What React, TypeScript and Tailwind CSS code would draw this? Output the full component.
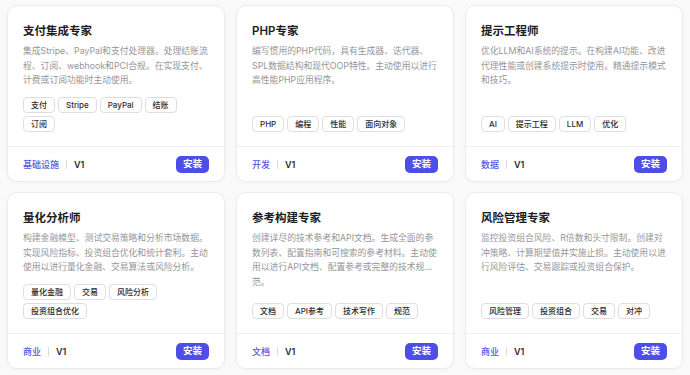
import React from "react";

type Card = {
  title: string;
  lines: string[];
  tags: string[];
  cat: string;
};

const cards: Card[] = [
  {
    title: "支付集成专家",
    lines: [
      "集成Stripe、PayPal和支付处理器。处理结账流",
      "程、订阅、webhook和PCI合规。在实现支付、",
      "计费或订阅功能时主动使用。",
    ],
    tags: ["支付", "Stripe", "PayPal", "结账", "订阅"],
    cat: "基础设施",
  },
  {
    title: "PHP专家",
    lines: [
      "编写惯用的PHP代码，具有生成器、迭代器、",
      "SPL数据结构和现代OOP特性。主动使用以进行",
      "高性能PHP应用程序。",
    ],
    tags: ["PHP", "编程", "性能", "面向对象"],
    cat: "开发",
  },
  {
    title: "提示工程师",
    lines: [
      "优化LLM和AI系统的提示。在构建AI功能、改进",
      "代理性能或创建系统提示时使用。精通提示模式",
      "和技巧。",
    ],
    tags: ["AI", "提示工程", "LLM", "优化"],
    cat: "数据",
  },
  {
    title: "量化分析师",
    lines: [
      "构建金融模型、测试交易策略和分析市场数据。",
      "实现风险指标、投资组合优化和统计套利。主动",
      "使用以进行量化金融、交易算法或风险分析。",
    ],
    tags: ["量化金融", "交易", "风险分析", "投资组合优化"],
    cat: "商业",
  },
  {
    title: "参考构建专家",
    lines: [
      "创建详尽的技术参考和API文档。生成全面的参",
      "数列表、配置指南和可搜索的参考材料。主动使",
      "用以进行API文档、配置参考或完整的技术规...",
      "范。",
    ],
    tags: ["文档", "API参考", "技术写作", "规范"],
    cat: "文档",
  },
  {
    title: "风险管理专家",
    lines: [
      "监控投资组合风险、R倍数和头寸限制。创建对",
      "冲策略、计算期望值并实施止损。主动使用以进",
      "行风险评估、交易跟踪或投资组合保护。",
    ],
    tags: ["风险管理", "投资组合", "交易", "对冲"],
    cat: "商业",
  },
];

function AgentCard({ c }: { c: Card }) {
  return (
    <div className="flex h-[177px] flex-col rounded-[10px] border border-[#ededf0] bg-white shadow-[0_1px_4px_rgba(0,0,0,0.04)]">
      <div className="flex h-[140px] flex-col px-[15px] pt-[16px] pb-[14px]">
        <div className="text-[11.5px] font-semibold leading-[18px] text-[#1c1c1e]">{c.title}</div>
        <div className="mt-[4px] text-[8.8px] leading-[14.5px] text-[#96969b]">
          {c.lines.map((l, i) => (
            <div key={i} className="whitespace-nowrap">
              {l}
            </div>
          ))}
        </div>
        <div className="mt-auto flex flex-wrap gap-[3px]">
          {c.tags.map((t) => (
            <span
              key={t}
              className="flex h-[16px] items-center rounded-[4px] border border-[#dedee2] px-[7px] text-[8px] font-medium leading-none text-[#2c2c2e]"
            >
              {t}
            </span>
          ))}
        </div>
      </div>
      <div className="flex flex-1 items-center justify-between border-t border-[#f0f0f3] px-[15px]">
        <div className="flex items-center text-[9px] leading-none">
          <span className="font-medium text-[#5457e0]">{c.cat}</span>
          <span className="mx-[7px] h-[9px] w-px bg-[#dcdce0]" />
          <span className="font-semibold text-[#2c2c2e]">V1</span>
        </div>
        <button className="flex h-[17px] items-center rounded-[5px] bg-[#4d4ee8] px-[7px] text-[9.5px] font-semibold leading-none text-white">
          安装
        </button>
      </div>
    </div>
  );
}

export default function App() {
  return (
    <div
      className="min-h-[375px] w-[690px] bg-[#fafafb] px-[7px] pt-[5px]"
      style={{ fontFamily: "Inter, 'Noto Sans CJK SC', 'Noto Sans', sans-serif" }}
    >
      <div className="grid grid-cols-3 gap-x-[11px] gap-y-[10px]">
        {cards.map((c) => (
          <AgentCard key={c.title} c={c} />
        ))}
      </div>
    </div>
  );
}
